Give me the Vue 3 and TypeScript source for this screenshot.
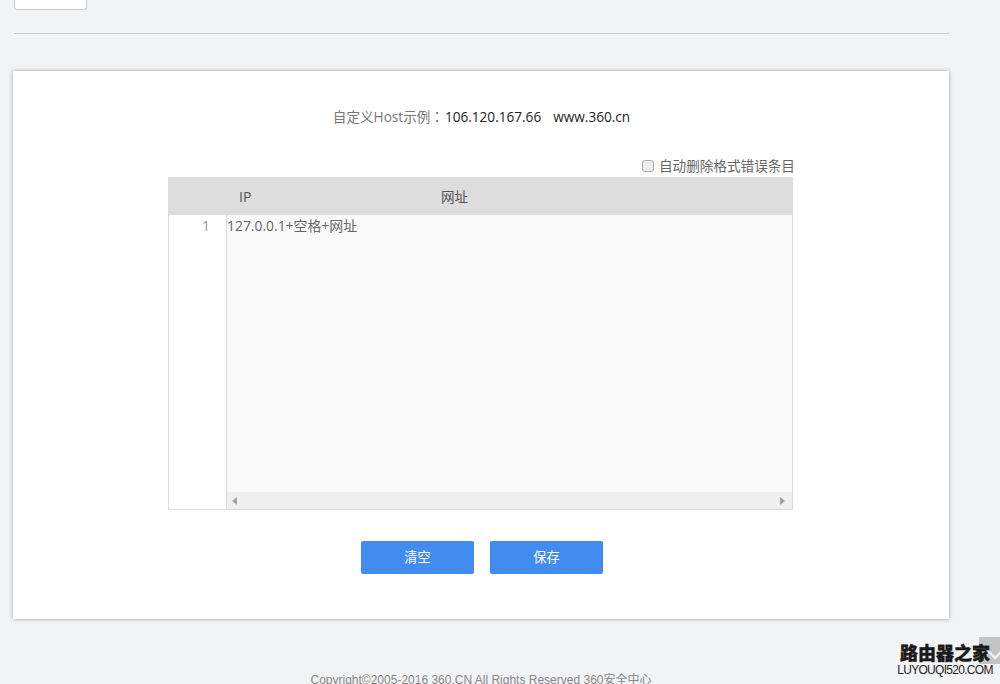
<script setup lang="ts">
const gutter: number[] = [1]
</script>

<template>
  <div class="page">
    <div class="top-btn"></div>
    <div class="rule"></div>
    <section class="card">
      <p class="hint">自定义Host示例<span class="colon">：</span><span class="dark">106.120.167.66 <span class="sep"></span> www.360.cn</span></p>
      <label class="auto"><span class="box"></span>自动删除格式错误条目</label>
      <div class="table">
        <div class="head"><span class="ip">IP</span><span class="url">网址</span></div>
        <div class="body">
          <div class="gutter"><div v-for="n in gutter" :key="n">{{ n }}</div></div>
          <div class="editor">
            <div class="code">127.0.0.1+空格+网址</div>
            <div class="scroll"><i class="left"></i><i class="right"></i></div>
          </div>
        </div>
      </div>
      <div class="actions">
        <button class="btn">清空</button>
        <button class="btn">保存</button>
      </div>
    </section>
    <footer class="foot">Copyright©2005-2016 360.CN All Rights Reserved 360安全中心</footer>
    <div class="totop"><svg width="21" height="27" viewBox="0 0 21 27"><path d="M9 14l7 7 7-7" fill="none" stroke="#f2f3f5" stroke-width="2"/></svg></div>
    <div class="mark">
      <div class="mark-cn">路由器之家</div>
      <div class="mark-en">LUYOUQI520.COM</div>
    </div>
  </div>
</template>

<style>
html, body { margin: 0; background: #f2f3f5; overflow: hidden; }
</style>

<style scoped>
.page {
  position: relative;
  height: 684px;
  overflow: hidden;
  background: #f2f3f5;
  font-family: "Open Sans", "Noto Sans CJK SC", sans-serif;
  font-size: 14px;
  color: #666;
}
.top-btn {
  width: 71px;
  height: 9px;
  margin-left: 14px;
  background: #fff;
  border: 1px solid #ccc;
  border-top: 0;
  border-radius: 0 0 3px 3px;
}
.rule {
  width: 935px;
  height: 1px;
  margin: 23px 0 0 14px;
  background: #ccc;
}
.card {
  width: 936px;
  height: 548px;
  margin: 37px 0 0 13px;
  background: #fff;
  box-shadow: 0 0 4px rgba(0, 0, 0, .35);
  display: flex;
  flex-direction: column;
  align-items: center;
}
.hint {
  margin: 36px 0 0 1px;
  height: 20px;
  line-height: 20px;
  font-size: 13.6px;
  color: #777;
  white-space: nowrap;
}
.colon { font-family: "Noto Sans CJK TC", sans-serif; line-height: 0; margin-right: 1px; }
.dark { color: #222; font-size: 13.6px; }
.sep { display: inline-block; width: 5px; }
.auto {
  align-self: flex-start;
  margin: 29px 0 0 629px;
  height: 20px;
  display: flex;
  align-items: center;
  gap: 5px;
  line-height: 20px;
  font-size: 13.6px;
  color: #666;
  white-space: nowrap;
}
.box {
  width: 10px;
  height: 10px;
  border: 1px solid #aaa;
  border-radius: 3px;
  background: #eee;
}
.table {
  width: 625px;
  margin-top: 1px;
  margin-left: -1px;
}
.head {
  height: 38px;
  background: #ddd;
  display: flex;
  align-items: center;
  line-height: 37px;
  color: #555;
}
.ip { margin-left: 71px; width: 202px; }
.url { font-size: 13.6px; }
.body {
  height: 294px;
  display: flex;
  border: 1px solid #ddd;
  border-top: 0;
}
.gutter {
  width: 58px;
  padding: 1px 16px 0 0;
  box-sizing: border-box;
  text-align: right;
  line-height: 19px;
  color: #999;
  background: #fff;
  border-right: 1px solid #ddd;
}
.editor {
  flex: 1;
  display: flex;
  flex-direction: column;
  background: #f9f9f9;
}
.code {
  flex: 1;
  padding-top: 1px;
  line-height: 19px;
  font-size: 13.9px;
  color: #666;
}
.scroll {
  height: 17px;
  background: #f0f0f0;
  display: flex;
  align-items: center;
  justify-content: space-between;
  padding: 0 7px 0 5px;
}
.left { border: 4px solid transparent; border-left: 0; border-right: 5px solid #a0a0a0; }
.right { border: 4px solid transparent; border-right: 0; border-left: 5px solid #a0a0a0; }
.actions {
  margin: 31px 0 0 2px;
  display: flex;
  gap: 16px;
}
.btn {
  width: 113px;
  height: 33px;
  border: 0;
  border-radius: 2px;
  background: #428bef;
  color: #fff;
  font: inherit;
  font-size: 13.2px;
  padding: 0 0 2px;
}
.foot {
  position: absolute;
  left: 0;
  width: 962px;
  top: 672px;
  text-align: center;
  font-family: "Liberation Sans", "Noto Sans CJK SC", sans-serif;
  font-size: 12px;
  line-height: 17px;
  color: #888;
}
.totop {
  position: absolute;
  left: 979px;
  top: 637px;
  width: 21px;
  height: 27px;
  background: #c4c4c4;
}
.mark {
  position: absolute;
  left: 896px;
  top: 641px;
  width: 98px;
  text-align: center;
}
.mark-cn {
  font-family: "Noto Sans CJK SC", sans-serif;
  font-weight: 900;
  font-size: 18px;
  line-height: 22px;
  -webkit-text-stroke: .4px #1a1a1a;
  color: #1a1a1a;
  white-space: nowrap;
}
.mark-en {
  font-family: "Liberation Sans", sans-serif;
  font-size: 12px;
  line-height: 14px;
  letter-spacing: -.7px;
  color: #222;
  white-space: nowrap;
}
</style>
